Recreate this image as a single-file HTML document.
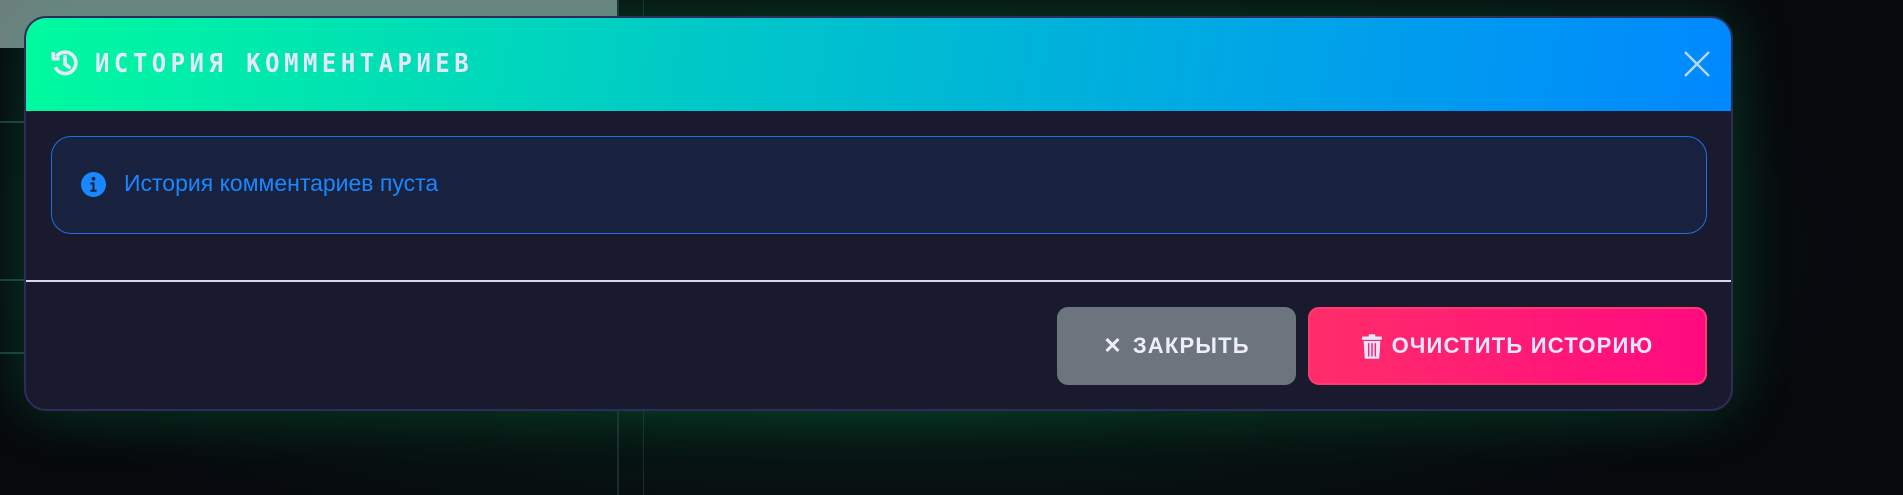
<!DOCTYPE html>
<html><head><meta charset="utf-8"><style>
*{box-sizing:border-box;margin:0;padding:0}
body{width:1903px;height:495px;overflow:hidden;background:#07090d;position:relative;font-family:"Liberation Sans",sans-serif}
.bg{position:absolute;inset:0;background:radial-gradient(ellipse 1000px 330px at 880px 250px,rgba(10,70,45,.95),rgba(7,30,22,.6) 60%,rgba(7,9,13,0) 100%)}
.grey{position:absolute;left:0;top:0;width:617px;height:48px;background:#6e7e7e}
.vl{position:absolute;top:0;bottom:0;width:2px;background:#1b2a33}
.hl{position:absolute;left:0;width:24px;height:2px;background:#1b3a3a}
.modal{position:absolute;left:24px;top:16px;width:1709px;height:395px;background:#1a1a2e;border:2px solid #2f2c5c;border-radius:22px;overflow:hidden;box-shadow:0 0 60px rgba(0,255,140,.18)}
.head{height:93px;background:linear-gradient(100deg,#00fb9e 0%,#00c8c8 40%,#0088ff 100%);position:relative}
.title{position:absolute;left:69px;top:31px;font-family:"DejaVu Sans Mono","Liberation Mono",monospace;font-weight:bold;font-size:26px;letter-spacing:4.9px;color:#e6e6fa;transform:scaleX(0.92);transform-origin:left;white-space:nowrap}
.hico{position:absolute;left:24px;top:30px}
.x{position:absolute;right:20px;top:32px}
.info{position:absolute;left:25px;top:118px;width:1656px;height:98px;border:1.5px solid #1f6fe0;border-radius:20px;background:#18223f}
.info span{position:absolute;left:72px;top:33px;font-size:23px;color:#1a86ff}
.iico{position:absolute;left:29px;top:35px}
.div{position:absolute;left:0;right:0;top:262px;height:2px;background:#d8d8e8}
.btn{position:absolute;top:289px;height:78px;border-radius:11px;color:#eeeefa;font-weight:bold;font-size:22px;letter-spacing:1.2px;display:flex;align-items:center;justify-content:center;gap:10px}
.b1{left:1031px;width:239px;background:#6c757d}
.b2{left:1282px;width:399px;background:linear-gradient(90deg,#ff2d6a,#ff0a80);border:2px solid #ff3a70;color:#e6e6fa}
</style></head><body>
<div class="bg"></div>
<div class="grey"></div>
<div class="vl" style="left:617px"></div><div class="vl" style="left:643px;width:1px"></div>
<div class="hl" style="top:121px"></div><div class="hl" style="top:279px"></div><div class="hl" style="top:352px"></div>
<div class="modal">
 <div class="head">
  <svg class="hico" width="30" height="30" viewBox="0 0 28 28" fill="none" stroke="#e6e6fa" stroke-width="3.4"><path d="M6 8A10 10 0 1 1 5 18"/><path d="M3 4v6h6" stroke-linejoin="round"/><path d="M14 8v7l4 3" stroke-linecap="round"/></svg>
  <div class="title">ИСТОРИЯ КОММЕНТАРИЕВ</div>
  <svg class="x" width="28" height="28" viewBox="0 0 28 28" stroke="#b8d8ff" stroke-width="2.4"><path d="M2 2L26 26M26 2L2 26"/></svg>
 </div>
 <div class="info">
  <svg class="iico" width="25" height="25" viewBox="0 0 24 24"><circle cx="12" cy="12" r="12" fill="#1a86ff"/><circle cx="12" cy="6.5" r="1.8" fill="#18223f"/><path d="M9 10h4v7h2v2H9v-2h2v-5H9z" fill="#18223f"/></svg>
  <span>История комментариев пуста</span>
 </div>
 <div class="div"></div>
 <div class="btn b1"><span style="font-size:22px">✕</span>ЗАКРЫТЬ</div>
 <div class="btn b2"><svg width="20" height="25" viewBox="0 0 18 22" fill="#e6e6fa"><rect x="0" y="2" width="18" height="3" rx="1"/><rect x="6" y="0" width="6" height="3" rx="1"/><path d="M1.5 6h15l-1 16h-13z"/><path d="M6 8v12M9 8v12M12 8v12" stroke="#ff1f78" stroke-width="1.3"/></svg>ОЧИСТИТЬ ИСТОРИЮ</div>
</div>
</body></html>
